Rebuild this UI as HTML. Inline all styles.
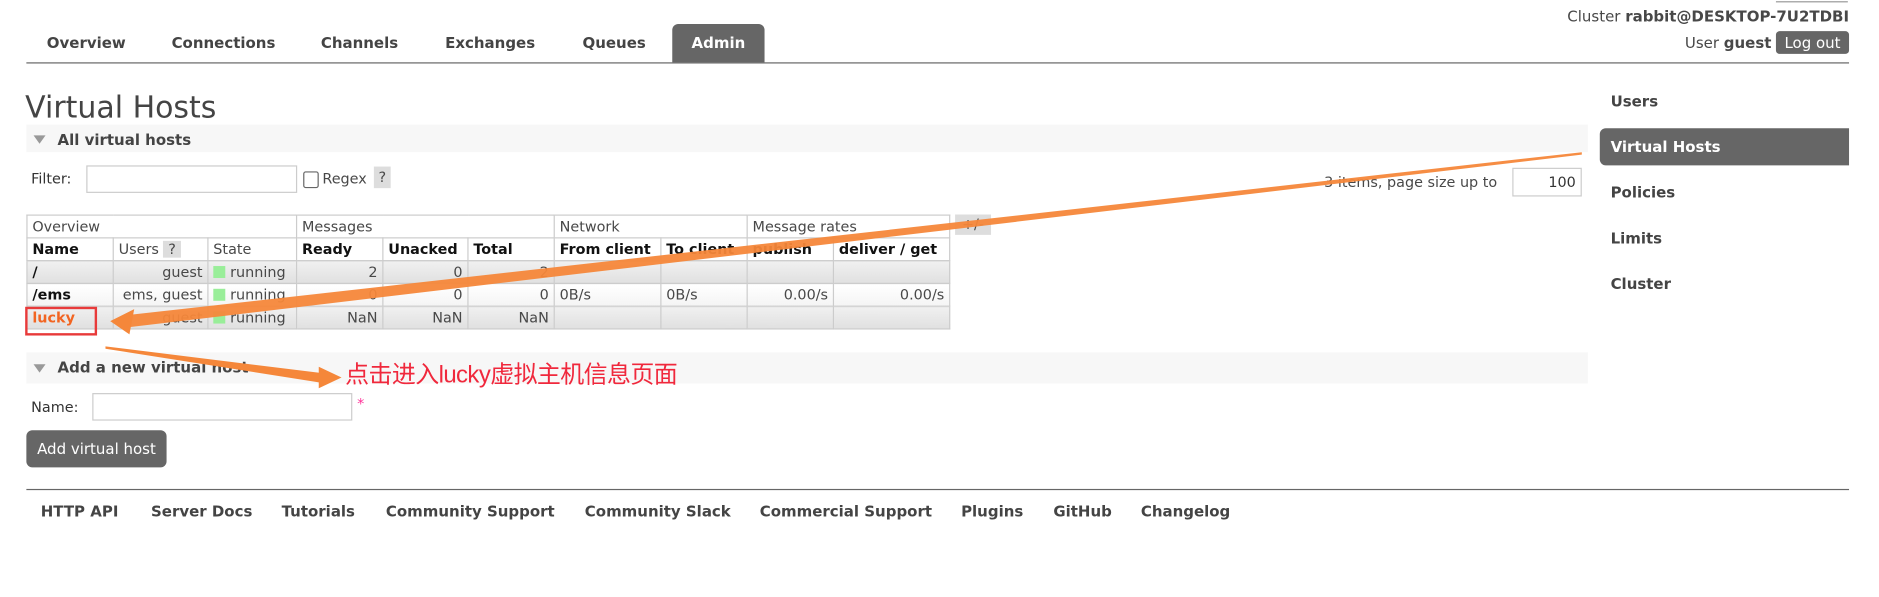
<!DOCTYPE html>
<html><head><meta charset="utf-8"><style>
html,body{margin:0;padding:0;background:#fff;overflow:hidden}
#w{position:absolute;left:0;top:0;width:1568px;height:498px;transform:scale(1.19834);transform-origin:0 0;font-family:"DejaVu Sans","Liberation Sans",sans-serif;font-size:12px;color:#484848}
.a{position:absolute;white-space:nowrap}
.b{font-weight:bold}
.tab{position:absolute;top:20px;height:32px;line-height:32px;font-weight:bold;font-size:12.5px;color:#444;text-align:center}
table{position:absolute;left:22px;top:179px;border-collapse:collapse;font-size:12px}
td{border:1px solid #ccc;height:18px;padding:0 4px;white-space:nowrap}
.r{text-align:right}
.g td{background:linear-gradient(#f0f0f0,#e0e0e0)}
.l td{background:linear-gradient(#fff,#f4f4f4)}
.sq{display:inline-block;width:10px;height:10px;background:#99ee99;margin-right:4px;vertical-align:-1px}
.nav{position:absolute;left:1344px;font-weight:bold;font-size:12.5px;color:#444}
.fl{position:absolute;top:419px;font-weight:bold;font-size:12.5px;color:#444}
.tri{position:absolute;width:0;height:0;border-left:5px solid transparent;border-right:5px solid transparent;border-top:7px solid #999}
</style></head><body><div id="w">
<div class="a" style="right:25px;top:6px;font-size:12.5px">Cluster <b>rabbit@DESKTOP-7U2TDBI</b></div>
<div class="a" style="left:1482px;top:0;width:60px;height:1px;border-bottom:1px solid #999"></div>
<div class="a" style="left:1406px;top:28px;font-size:12.5px">User <b>guest</b></div>
<div class="a" style="left:1482px;top:26px;width:61px;height:19px;background:#666;color:#fff;border-radius:3px;text-align:center;line-height:19px;font-size:12.5px">Log out</div>
<div class="tab" style="left:22px;width:100px">Overview</div>
<div class="tab" style="left:130px;width:113px">Connections</div>
<div class="tab" style="left:255px;width:90px">Channels</div>
<div class="tab" style="left:358px;width:102px">Exchanges</div>
<div class="tab" style="left:475px;width:75px">Queues</div>
<div class="tab" style="left:561px;width:77px;background:#666;color:#fff;border-radius:5px 5px 0 0">Admin</div>
<div class="a" style="left:22px;top:52px;width:1521px;height:1px;background:#666"></div>
<div class="a" style="left:21px;top:75px;font-size:25px;color:#444">Virtual Hosts</div>
<div class="a" style="left:22px;top:104px;width:1303px;height:23px;background:#f7f7f7"></div>
<div class="tri" style="left:28px;top:113px"></div>
<div class="a b" style="left:48px;top:109px;font-size:12.5px;color:#444">All virtual hosts</div>
<div class="a" style="left:26px;top:142px;color:#333">Filter:</div>
<div class="a" style="left:72px;top:138px;width:174px;height:21px;border:1px solid #ccc"></div>
<div class="a" style="left:253px;top:143px;width:11px;height:12px;border:1px solid #666;border-radius:2px"></div>
<div class="a" style="left:269px;top:142px">Regex</div>
<div class="a" style="left:312px;top:139px;width:14px;height:18px;background:#ddd;text-align:center;line-height:18px">?</div>
<div class="a" style="left:1105px;top:145px">3 items, page size up to</div>
<div class="a" style="left:1262px;top:140px;width:56px;height:22px;border:1px solid #ccc;text-align:right;line-height:22px;color:#333"><span style="padding-right:4px">100</span></div>
<div class="a" style="left:797px;top:179px;width:30px;height:17px;background:#ddd;text-align:center;line-height:17px">+/-</div>
<table>
<tr><td colspan="3" style="width:216px">Overview</td><td colspan="3">Messages</td><td colspan="2">Network</td><td colspan="2">Message rates</td></tr>
<tr class="b" style="color:#111"><td style="width:63px">Name</td><td style="width:70px;font-weight:normal;color:#484848">Users <span style="background:#ddd;padding:0 4px">?</span></td><td style="width:65px;font-weight:normal;color:#484848">State</td><td style="width:63px">Ready</td><td style="width:62px">Unacked</td><td style="width:63px">Total</td><td style="width:80px">From client</td><td style="width:63px">To client</td><td style="width:63px">publish</td><td style="width:88px">deliver / get</td></tr>
<tr class="g"><td class="b" style="color:#111">/</td><td class="r">guest</td><td><span class="sq"></span>running</td><td class="r">2</td><td class="r">0</td><td class="r">2</td><td></td><td></td><td></td><td></td></tr>
<tr class="l"><td class="b" style="color:#111">/ems</td><td class="r">ems, guest</td><td><span class="sq"></span>running</td><td class="r">0</td><td class="r">0</td><td class="r">0</td><td>0B/s</td><td>0B/s</td><td class="r">0.00/s</td><td class="r">0.00/s</td></tr>
<tr class="g"><td class="b" style="color:#f26522">lucky</td><td class="r">guest</td><td><span class="sq"></span>running</td><td class="r">NaN</td><td class="r">NaN</td><td class="r">NaN</td><td></td><td></td><td></td><td></td></tr>
</table>
<div class="a" style="left:21px;top:256px;width:56px;height:20px;border:2px solid #e83a3a"></div>
<div class="a" style="left:22px;top:294px;width:1303px;height:26px;background:#f7f7f7"></div>
<div class="tri" style="left:28px;top:304px"></div>
<div class="a b" style="left:48px;top:299px;font-size:12.5px;color:#444">Add a new virtual host</div>
<div class="a" style="left:26px;top:333px;color:#333">Name:</div>
<div class="a" style="left:77px;top:328px;width:215px;height:21px;border:1px solid #ccc"></div>
<div class="a" style="left:298px;top:330px;color:#f39">*</div>
<div class="a" style="left:22px;top:359px;width:117px;height:31px;background:#666;color:#fff;border-radius:5px;text-align:center;line-height:31px;font-size:12.5px">Add virtual host</div>
<div class="a" style="left:22px;top:408px;width:1521px;height:1px;background:#666"></div>
<div class="fl" style="left:34px">HTTP API</div>
<div class="fl" style="left:126px">Server Docs</div>
<div class="fl" style="left:235px">Tutorials</div>
<div class="fl" style="left:322px">Community Support</div>
<div class="fl" style="left:488px">Community Slack</div>
<div class="fl" style="left:634px">Commercial Support</div>
<div class="fl" style="left:802px">Plugins</div>
<div class="fl" style="left:879px">GitHub</div>
<div class="fl" style="left:952px">Changelog</div>
<div class="nav" style="top:77px">Users</div>
<div class="a" style="left:1335px;top:107px;width:208px;height:31px;background:#666;border-radius:5px 0 0 5px"></div>
<div class="nav" style="top:115px;color:#fff">Virtual Hosts</div>
<div class="nav" style="top:153px">Policies</div>
<div class="nav" style="top:191px">Limits</div>
<div class="nav" style="top:229px">Cluster</div>
<div class="a" style="left:288px;top:296px;font-family:'Liberation Sans','Noto Sans CJK SC',sans-serif;font-size:20px;color:#f0283c;letter-spacing:-0.5px">点击进入lucky虚拟主机信息页面</div>
<svg class="a" style="left:0;top:0" width="1568" height="498">
<polygon points="1320,127 1320,129 108,273 106,263" fill="#f5873a" opacity="0.95"/>
<polygon points="92,268 112,258 108,279" fill="#f5873a"/>
<polygon points="88,289 88,291 272,320 274,312" fill="#f5873a"/>
<polygon points="285,315 266,306 266,324" fill="#f5873a"/>
</svg>
</div></body></html>
